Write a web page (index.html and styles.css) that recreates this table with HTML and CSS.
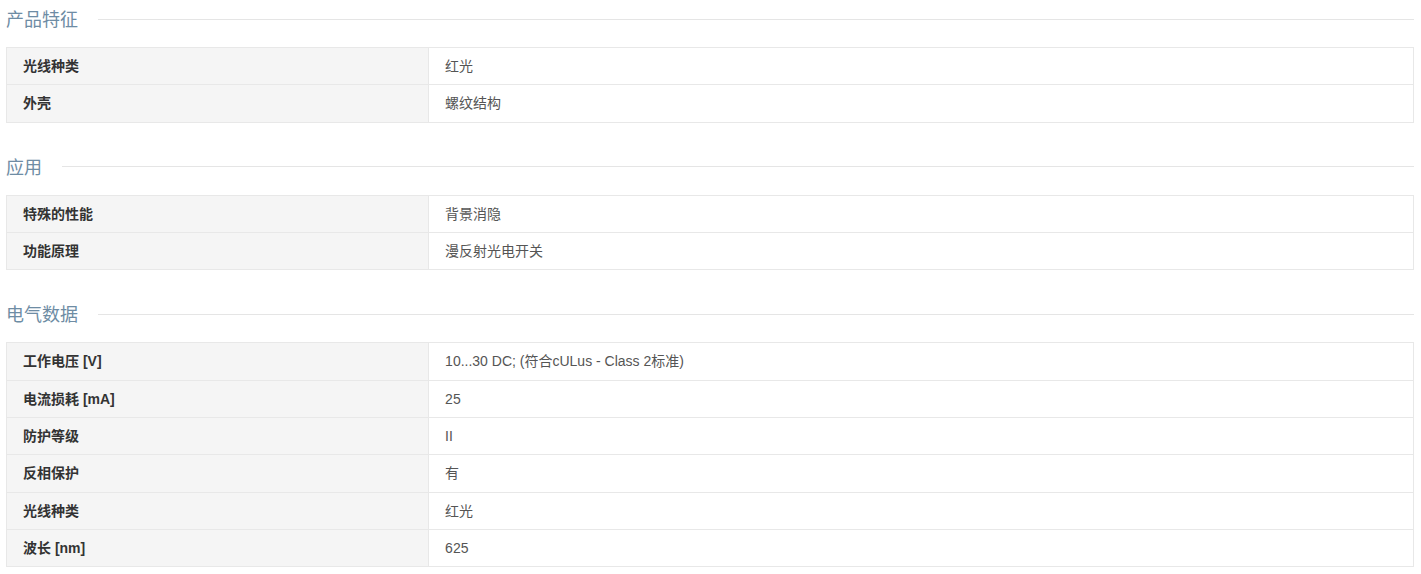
FILE: index.html
```html
<!DOCTYPE html>
<html>
	<head>
		<meta charset="utf-8">
		<title>产品参数</title>
		<link rel="stylesheet" href="styles.css">
	</head>
	<body>
		<div class="specs">
			<div class="section">
				<h2 class="section-title"><span>产品特征</span></h2>
				<table class="spec-table">
					<tr><th>光线种类</th><td>红光</td></tr>
					<tr><th>外壳</th><td>螺纹结构</td></tr>
				</table>
			</div>
			<div class="section">
				<h2 class="section-title"><span>应用</span></h2>
				<table class="spec-table">
					<tr><th>特殊的性能</th><td>背景消隐</td></tr>
					<tr><th>功能原理</th><td>漫反射光电开关</td></tr>
				</table>
			</div>
			<div class="section">
				<h2 class="section-title"><span>电气数据</span></h2>
				<table class="spec-table">
					<tr><th>工作电压 [V]</th><td>10...30 DC; (符合cULus - Class 2标准)</td></tr>
					<tr><th>电流损耗 [mA]</th><td>25</td></tr>
					<tr><th>防护等级</th><td>II</td></tr>
					<tr><th>反相保护</th><td>有</td></tr>
					<tr><th>光线种类</th><td>红光</td></tr>
					<tr><th>波长 [nm]</th><td>625</td></tr>
				</table>
			</div>
		</div>
	</body>
</html>
```

FILE: styles.css
```css
body {
	margin: 0;
	font-family: "Liberation Sans", "Noto Sans CJK SC", sans-serif;
	font-size: 14px;
	color: #555;
	background: #fff;
}
.specs {
	padding: 6px 7px 0 6px;
}
.section {
	margin-bottom: 31px;
}
.section-title {
	display: flex;
	align-items: center;
	margin: 0 0 15px;
	font-size: 18px;
	line-height: 26px;
	font-weight: normal;
	color: #6e8ca4;
}
.section-title span {
	position: relative;
	top: 1px;
}
.section-title::after {
	content: "";
	flex: 1;
	height: 1px;
	margin-left: 20px;
	background: #e5e5e5;
}
.spec-table {
	width: 100%;
	border-collapse: collapse;
	table-layout: fixed;
}
.spec-table th,
.spec-table td {
	height: 36.33px;
	padding: 0 16px;
	border: 1px solid #e8e8e8;
	text-align: left;
	vertical-align: middle;
	line-height: 20px;
}
.spec-table th {
	box-sizing: border-box;
	width: 30%;
	background: #f5f5f5;
	font-weight: bold;
	color: #333;
}
```
